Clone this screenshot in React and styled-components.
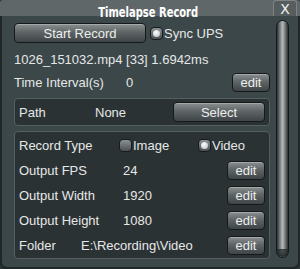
import styled, { createGlobalStyle } from "styled-components";

const GlobalStyle = createGlobalStyle`
  html, body {
    margin: 0;
    padding: 0;
    background: #2b3335;
  }
  body {
    font-family: "Liberation Sans", Arial, sans-serif;
    font-size: 13px;
    color: #e6e8e8;
  }
`;

const Window = styled.div`
  width: 300px;
  height: 269px;
  display: flex;
  flex-direction: column;
  background: #2b3335;
`;

const TitleBar = styled.header`
  height: 16px;
  flex: 0 0 16px;
  display: flex;
  align-items: flex-start;
  padding-left: 24px;
  background: #5f6769;
  border-radius: 3px 3px 0 0;
`;

const Title = styled.h1`
  flex: 1;
  margin: 4px 0 0;
  text-align: center;
  font-family: "DejaVu Sans Condensed", "DejaVu Sans", sans-serif;
  font-weight: bold;
  font-size: 14px;
  line-height: 16px;
  color: #ffffff;
  position: relative;
  z-index: 1;

  span {
    display: inline-block;
    transform: scaleX(0.79);
  }
`;

const CloseButton = styled.button`
  width: 24px;
  height: 16px;
  margin-right: 3px;
  padding: 1px 0 0;
  box-sizing: border-box;
  background: #555d5f;
  border: 1px solid #7d8486;
  border-bottom: none;
  border-radius: 3px 3px 0 0;
  color: #f2f2f2;
  font-family: "DejaVu Sans", sans-serif;
  font-size: 14px;
  line-height: 14px;
`;

const Body = styled.div`
  flex: 1;
  display: flex;
  gap: 6px;
  background: #3c4749;
  border: 2px solid #1f2729;
  border-top: none;
  border-radius: 0 0 7px 7px;
`;

const Content = styled.div`
  width: 256px;
  margin-left: 12px;
  padding-top: 7px;
  display: flex;
  flex-direction: column;
`;

const Row = styled.div`
  display: flex;
  align-items: center;
  height: ${(p) => p.$h || 19}px;
  margin-top: ${(p) => p.$mt || 0}px;
`;

const Label = styled.span`
  width: ${(p) => p.$w}px;
  flex: 0 0 ${(p) => p.$w}px;
  white-space: nowrap;
`;

const Value = styled.span`
  flex: 1;
  white-space: nowrap;
`;

const Info = styled.div`
  margin-top: 9px;
  line-height: 16px;
  white-space: nowrap;
`;

const Button = styled.button`
  width: ${(p) => p.$w}px;
  height: ${(p) => p.$h || 19}px;
  padding: 0;
  box-sizing: border-box;
  font-family: "Liberation Sans", Arial, sans-serif;
  font-size: 13px;
  color: #eceeee;
  border: 1px solid #15191a;
  border-radius: 4px;
  background: linear-gradient(to bottom, #8a8f90 0%, #5f6566 45%, #3f4546 100%);
  box-shadow: inset 0 1px 0 rgba(255, 255, 255, 0.25);
`;

const Panel = styled.section`
  border: 1px solid #565e60;
  border-radius: 4px;
  background: #2b3234;
  padding: ${(p) => p.$pad || "0 4px"};
  margin-top: ${(p) => p.$mt}px;
  display: flex;
  flex-direction: column;
`;

const PanelRow = styled.div`
  display: flex;
  align-items: center;
  height: ${(p) => p.$h || 25}px;
`;

const Choice = styled.label`
  display: flex;
  align-items: center;
  width: ${(p) => p.$w || "auto"}px;
  flex: 0 0 auto;
`;

const Box = styled.span`
  width: 13px;
  height: 13px;
  box-sizing: border-box;
  margin-right: 1px;
  border: 1px solid #171b1c;
  border-radius: 4px;
  background: linear-gradient(to bottom, #8d9293, #4a5051);
  display: flex;
  align-items: center;
  justify-content: center;

  &::after {
    content: "";
    display: ${(p) => (p.$on ? "block" : "none")};
    width: 7px;
    height: 7px;
    border-radius: 50%;
    background: radial-gradient(circle at 40% 35%, #ffffff, #c9cccd 70%);
  }
`;

const Scrollbar = styled.div`
  width: 13px;
  height: 238px;
  margin-top: 4px;
  box-sizing: border-box;
  border: 1px solid #141819;
  border-radius: 7px;
  background: linear-gradient(
    to right,
    #2a2e2f 0%,
    #6a6f70 22%,
    #b4b8b9 50%,
    #6a6f70 78%,
    #2a2e2f 100%
  );
  position: relative;
  overflow: hidden;

  &::after {
    content: "";
    position: absolute;
    left: 0;
    right: 0;
    bottom: 0;
    height: 8px;
    border-radius: 0 0 6px 6px;
    background: radial-gradient(ellipse at 50% 30%, #4a5051, #202425 80%);
  }
`;

function Check({ on, children, w }) {
  return (
    <Choice $w={w}>
      <Box $on={on} />
      {children}
    </Choice>
  );
}

const rows = [
  { label: "Output FPS", value: "24", w: 104 },
  { label: "Output Width", value: "1920", w: 104 },
  { label: "Output Height", value: "1080", w: 104 },
  { label: "Folder", value: "E:\\Recording\\Video", w: 62 },
];

export default function App() {
  return (
    <>
      <GlobalStyle />
      <Window>
        <TitleBar>
          <Title>
            <span>Timelapse Record</span>
          </Title>
          <CloseButton>X</CloseButton>
        </TitleBar>
        <Body>
          <Content>
            <Row $h={20}>
              <Button $w={132} $h={20}>Start Record</Button>
              <span style={{ width: 4 }} />
              <Check on>Sync UPS</Check>
            </Row>
            <Info>1026_151032.mp4 [33] 1.6942ms</Info>
            <Row $mt={5}>
              <Label $w={112}>Time Interval(s)</Label>
              <Value>0</Value>
              <Button $w={38}>edit</Button>
            </Row>
            <Panel $mt={6} $pad="3px 4px">
              <PanelRow $h={20}>
                <Label $w={76}>Path</Label>
                <Value>None</Value>
                <Button $w={92} $h={20}>Select</Button>
              </PanelRow>
            </Panel>
            <Panel $mt={5} $pad="1px 4px 0">
              <PanelRow>
                <Label $w={100}>Record Type</Label>
                <Check w={79}>Image</Check>
                <Check on>Video</Check>
              </PanelRow>
              {rows.map((r) => (
                <PanelRow key={r.label}>
                  <Label $w={r.w}>{r.label}</Label>
                  <Value>{r.value}</Value>
                  <Button $w={38}>edit</Button>
                </PanelRow>
              ))}
            </Panel>
          </Content>
          <Scrollbar />
        </Body>
      </Window>
    </>
  );
}
